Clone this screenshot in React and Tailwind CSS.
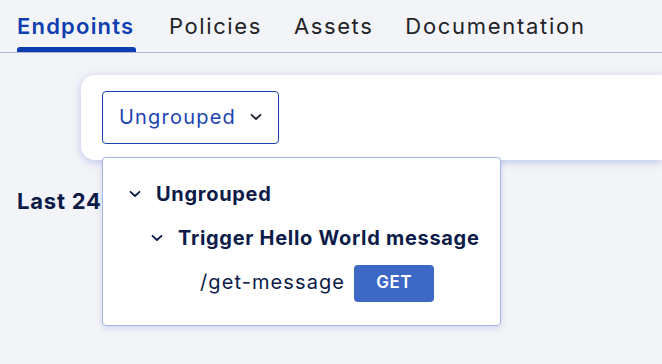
import React from "react";

const Chevron = ({ className = "" }) => (
  <svg width="12" height="8" viewBox="0 0 12 8" className={className} fill="none">
    <path d="M1.5 1.8 L6 6 L10.5 1.8" stroke="currentColor" strokeWidth="1.8" strokeLinecap="round" strokeLinejoin="round" />
  </svg>
);

export default function App() {
  const font = { fontFamily: "Inter, 'Open Sans', sans-serif" };
  return (
    <div className="relative w-[662px] h-[364px] overflow-hidden bg-[#f3f4f7]" style={font}>
      <div className="flex items-end h-[53px] border-b border-[#a8b5cc] pl-[17px]">
        <div className="flex flex-col items-stretch">
          <span className="text-[22px] font-semibold tracking-[1.2px] text-[#0f3eb0] leading-none pb-[10px] whitespace-nowrap">Endpoints</span>
          <div className="h-[5px] w-[119px] bg-[#0b3db1] rounded-t-[3px]" />
        </div>
        <span className="ml-[33px] text-[22px] tracking-[1.6px] text-[#222326] leading-none pb-[15px]">Policies</span>
        <span className="ml-[32px] text-[22px] tracking-[1.6px] text-[#222326] leading-none pb-[15px]">Assets</span>
        <span className="ml-[32px] text-[22px] tracking-[1.7px] text-[#222326] leading-none pb-[15px]">Documentation</span>
      </div>

      <div className="ml-[81px] mt-[22px] h-[85px] rounded-l-[14px] bg-white shadow-[0_2px_8px_rgba(120,140,220,0.45)] pl-[21px] pt-[16px]">
        <div className="flex items-center w-[177px] h-[53px] border border-[#1b44b0] rounded-[4px] pl-[16px] pb-[2px]">
          <span className="text-[20px] tracking-[1.2px] text-[#1b44b0] leading-none">Ungrouped</span>
          <Chevron className="ml-[14px] text-[#1d2333]" />
        </div>
      </div>

      <div className="pl-[17px] pt-[25px] text-[22px] font-bold tracking-[0.8px] text-[#0c1b48] whitespace-nowrap">Last 24 hours</div>

      <div className="absolute left-[102px] top-[157px] w-[399px] h-[169px] bg-white border border-[#a4b6e6] rounded-[4px] shadow-[0_2px_6px_rgba(120,140,220,0.3)] pt-[14px]">
        <div className="flex items-center pl-[26px] h-[44px]">
          <Chevron className="text-[#0c1b48]" />
          <span className="ml-[15px] text-[20px] font-bold tracking-[0.7px] text-[#0c1b48] leading-none">Ungrouped</span>
        </div>
        <div className="flex items-center pl-[48px] h-[44px]">
          <Chevron className="text-[#0c1b48]" />
          <span className="ml-[15px] text-[20px] font-bold tracking-[0.7px] text-[#0c1b48] leading-none whitespace-nowrap">Trigger Hello World message</span>
        </div>
        <div className="flex items-center pl-[97px] h-[44px]">
          <span className="text-[20px] tracking-[1.1px] text-[#0c1b48] leading-none">/get-message</span>
          <span className="ml-[9px] mt-[2px] flex items-center justify-center w-[80px] h-[37px] rounded-[4px] bg-[#3d68c6] text-white text-[17px] font-semibold tracking-[0.5px]">GET</span>
        </div>
      </div>
    </div>
  );
}
